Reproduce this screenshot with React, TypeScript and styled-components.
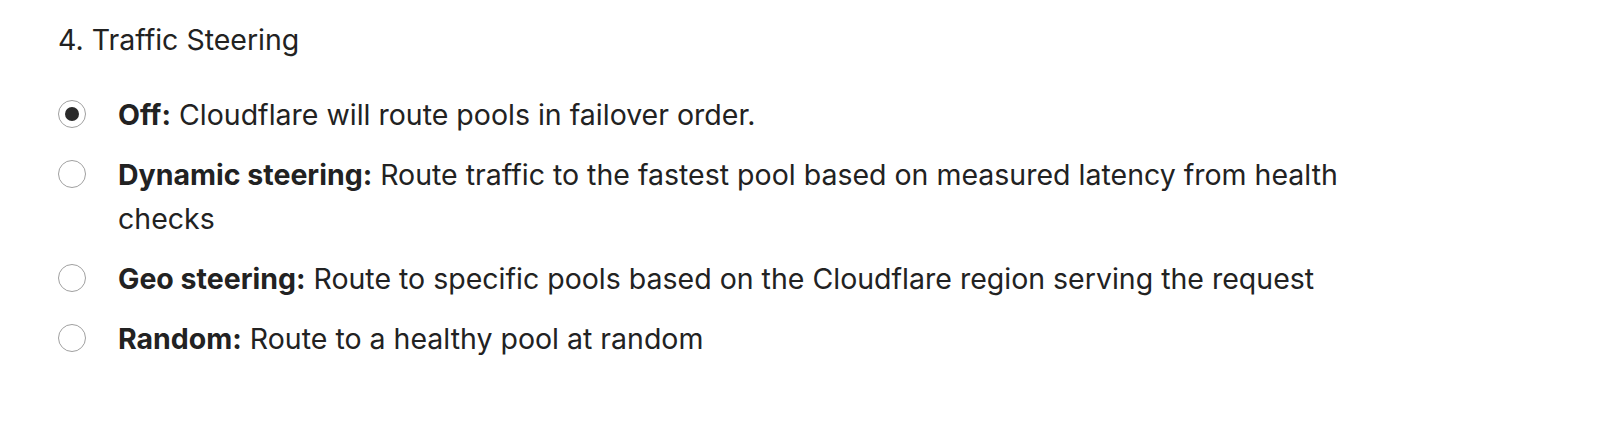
import styled, { createGlobalStyle } from 'styled-components'

const GlobalStyle = createGlobalStyle`
  html, body {
    margin: 0;
    padding: 0;
    background: #fff;
  }
  body {
    font-family: Inter, "Noto Sans", "Liberation Sans", sans-serif;
    color: #222;
  }
`

type Option = {
  id: string
  label: string
  description: string
}

const options: Option[] = [
  { id: 'off', label: 'Off:', description: 'Cloudflare will route pools in failover order.' },
  {
    id: 'dynamic',
    label: 'Dynamic steering:',
    description: 'Route traffic to the fastest pool based on measured latency from health checks',
  },
  {
    id: 'geo',
    label: 'Geo steering:',
    description: 'Route to specific pools based on the Cloudflare region serving the request',
  },
  { id: 'random', label: 'Random:', description: 'Route to a healthy pool at random' },
]

const Section = styled.section`
  padding: 20px 0 0 58px;
`

const Title = styled.h3`
  margin: 0 0 33px;
  font-size: 28.5px;
  font-weight: 400;
  line-height: 40px;
  color: #222;
`

const OptionList = styled.div`
  display: flex;
  flex-direction: column;
  gap: 16px;
`

const Row = styled.label`
  display: flex;
  align-items: flex-start;
  gap: 32px;
  cursor: pointer;
`

const Radio = styled.span<{ $checked: boolean }>`
  flex: none;
  box-sizing: border-box;
  width: 28px;
  height: 28px;
  margin-top: 7px;
  border-radius: 50%;
  border: 1.5px solid #a0a0a0;
  background: #fff;
  display: flex;
  align-items: center;
  justify-content: center;

  &::after {
    content: '';
    width: 14px;
    height: 14px;
    border-radius: 50%;
    background: #2a2a2a;
    display: ${(p) => (p.$checked ? 'block' : 'none')};
  }
`

const Text = styled.span`
  max-width: 1260px;
  font-size: 28.5px;
  line-height: 44px;
  color: #222;
`

const Label = styled.strong`
  font-weight: 700;
`

const App = () => (
  <>
    <GlobalStyle />
    <Section>
      <Title>4. Traffic Steering</Title>
      <OptionList>
        {options.map((o) => (
          <Row key={o.id}>
            <Radio $checked={o.id === 'off'} />
            <Text>
              <Label>{o.label}</Label> {o.description}
            </Text>
          </Row>
        ))}
      </OptionList>
    </Section>
  </>
)

export default App
